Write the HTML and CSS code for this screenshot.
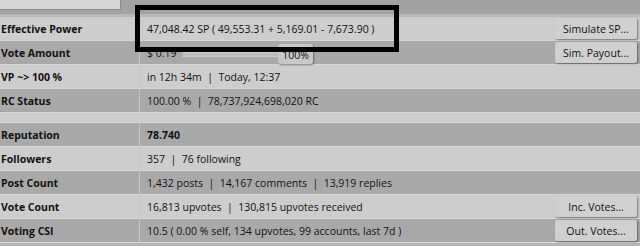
FILE: index.html
```html
<!DOCTYPE html>
<html lang="en">
<head>
  <meta charset="UTF-8">
  <meta name="viewport" content="width=device-width, initial-scale=1.0">
  <title>Account Info</title>
  <link rel="stylesheet" href="styles.css">
</head>
<body>
  <div class="topbar">
    <div class="topbox"></div>
  </div>

  <div class="info">
    <div class="row light">
      <div class="label">Effective Power</div>
      <div class="value">
        <span>47,048.42 SP ( 49,553.31 + 5,169.01 - 7,673.90 )</span>
        <button class="btn">Simulate SP...</button>
      </div>
    </div>
    <div class="row dark">
      <div class="label">Vote Amount</div>
      <div class="value">
        <span class="amount">$ 0.19</span>
        <div class="slider">
          <div class="track"></div>
          <div class="handle">100%</div>
        </div>
        <button class="btn">Sim. Payout...</button>
      </div>
    </div>
    <div class="row light">
      <div class="label">VP ~&gt; 100 %</div>
      <div class="value">in 12h 34m &nbsp;|&nbsp; Today, 12:37</div>
    </div>
    <div class="row dark">
      <div class="label">RC Status</div>
      <div class="value">100.00 % &nbsp;|&nbsp; 78,737,924,698,020 RC</div>
    </div>

    <div class="spacer"></div>

    <div class="row dark">
      <div class="label">Reputation</div>
      <div class="value"><b>78.740</b></div>
    </div>
    <div class="row light">
      <div class="label">Followers</div>
      <div class="value">357 &nbsp;|&nbsp; 76 following</div>
    </div>
    <div class="row dark">
      <div class="label">Post Count</div>
      <div class="value">1,432 posts &nbsp;|&nbsp; 14,167 comments &nbsp;|&nbsp; 13,919 replies</div>
    </div>
    <div class="row light">
      <div class="label">Vote Count</div>
      <div class="value">
        <span>16,813 upvotes &nbsp;|&nbsp; 130,815 upvotes received</span>
        <button class="btn">Inc. Votes...</button>
      </div>
    </div>
    <div class="row dark">
      <div class="label">Voting CSI</div>
      <div class="value">
        <span>10.5 ( 0.00 % self, 134 upvotes, 99 accounts, last 7d )</span>
        <button class="btn">Out. Votes...</button>
      </div>
    </div>
  </div>

  <div class="highlight"></div>
</body>
</html>
```

FILE: styles.css
```css
body {
  margin: 0;
  font-family: 'Open Sans', 'Liberation Sans', sans-serif;
  font-size: 10.5px;
  color: #111;
  background: #b4b4b4;
  position: relative;
}

.topbar {
  height: 14px;
  background: #a2a2a2;
  border-bottom: 3px solid #b8b8b8;
}

.topbox {
  width: 121px;
  height: 10px;
  background: #d6d6d6;
  border-right: 1px solid #8c8c8c;
  border-bottom: 1px solid #8c8c8c;
  box-sizing: border-box;
}

.row {
  display: flex;
  height: 24px;
  box-sizing: border-box;
  border-bottom: 1px solid #d8d8d8;
}

.row.light {
  background: #cdcdcd;
}

.row.dark {
  background: #a9a9a9;
}

.label {
  width: 140px;
  flex-shrink: 0;
  box-sizing: border-box;
  padding-left: 1px;
  font-weight: bold;
  display: flex;
  align-items: center;
  border-right: 1px solid #c4c4c4;
}

.value {
  flex: 1;
  display: flex;
  align-items: center;
  padding-left: 7px;
  padding-right: 3px;
  white-space: nowrap;
}

.value b {
  font-weight: bold;
}

.btn {
  margin-left: auto;
  width: 82px;
  height: 21px;
  font-family: inherit;
  font-size: 10.5px;
  color: #111;
  background: #d0d0d0;
  border: none;
  border-radius: 2px;
  box-shadow: 1px 1px 2px rgba(0,0,0,0.45);
  padding: 0;
}

.amount {
  width: 36px;
  flex-shrink: 0;
}

.slider {
  display: flex;
  align-items: center;
  height: 100%;
  flex-shrink: 0;
}

.track {
  width: 95px;
  height: 3px;
  margin-top: 4px;
  border-top: 1px dotted #dadada;
  border-bottom: 1px dotted #dadada;
  background: #bdbdbd;
}

.handle {
  width: 35px;
  height: 20px;
  margin-top: 2px;
  padding-top: 3px;
  box-sizing: border-box;
  display: flex;
  align-items: center;
  justify-content: center;
  background: #c8c8c8;
  border-radius: 2px;
  box-shadow: 1px 1px 2px rgba(0,0,0,0.4);
}

.spacer {
  height: 10px;
  background: #cdcdcd;
  border-bottom: 1px solid #d8d8d8;
  box-sizing: border-box;
}

.highlight {
  position: absolute;
  left: 135px;
  top: 5px;
  width: 264px;
  height: 47px;
  box-sizing: border-box;
  border: 5px solid #000;
}
```
